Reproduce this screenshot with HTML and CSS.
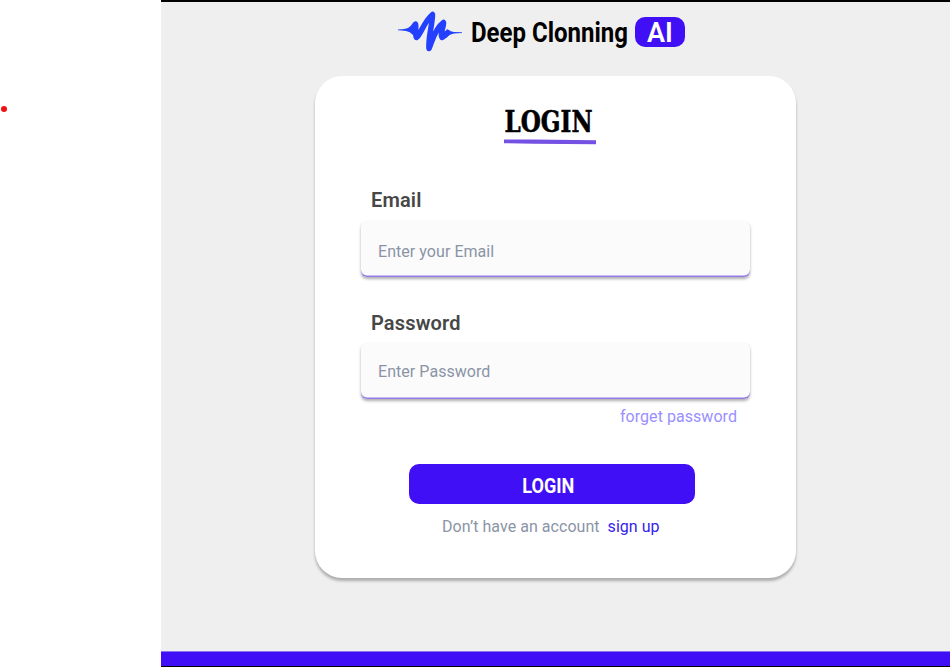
FILE: index.html
```html
<!DOCTYPE html>
<html lang="en">
<head>
<meta charset="utf-8">
<title>Deep Clonning AI</title>
<link rel="stylesheet" href="styles.css">
</head>
<body>
<aside class="gutter"><span class="dot"></span></aside>
<div class="screen">
  <header class="brand">
    <svg class="wave" viewBox="0 0 66 42" width="66" height="42" aria-hidden="true">
      <path class="tail" d="M1 18.500Q8 18.400 11 17Q14 15 16 12L19 22L16 24Q13 20.500 9 20Q5 19.500 1 19.300ZM46 27L50 18Q52 20.500 57 20.900L65 21.300V21.900L57 22.600Q53 23 49 27Z"/>
      <path class="pulse" d="M18.500 13C19.500 16 17.500 24 19.500 26.500C23.500 24 27 10.500 35.500 3.500C35.500 13 31 27 32 37.500C35 31 37.500 18 46.500 11.500C47 16 42.500 23 45 26.500C47 26 49 22.500 51 21.500"/>
    </svg>
    <svg class="wordmark" width="160" height="36">
      <text x="0" y="27.500" textLength="157" lengthAdjust="spacingAndGlyphs">Deep Clonning</text>
    </svg>
    <span class="badge">AI</span>
  </header>
  <main class="card">
    <h1 class="title">
      <svg class="title-text" width="92" height="32">
        <text x="0.5" y="27" textLength="88" lengthAdjust="spacingAndGlyphs">LOGIN</text>
      </svg>
      <svg class="underline" width="92" height="6" aria-hidden="true"><path d="M0 .5 28 .6 92 1.200V5.200L30 4.700 0 4.200Z"/></svg>
    </h1>
    <form class="form">
      <label class="label" for="email">Email</label>
      <input class="field" id="email" type="email" placeholder="Enter your Email">
      <label class="label label-password" for="password">Password</label>
      <input class="field field-password" id="password" type="password" placeholder="Enter Password">
      <a class="forgot">forget password</a>
      <button class="submit" type="button"><span class="submit-text">LOGIN</span></button>
      <p class="signup">Don’t have an account <a class="signup-link">sign up</a></p>
    </form>
  </main>
  <footer class="footer"></footer>
</div>
</body>
</html>
```
FILE: styles.css
```css
* { box-sizing: border-box; }
body {
  margin: 0;
  height: 667px;
  display: flex;
  overflow: hidden;
  background: #fff;
  font-family: Roboto, sans-serif;
}
.gutter { width: 161px; padding: 106px 0 0 1px; }
.dot { display: block; width: 6px; height: 6px; border-radius: 50%; background: #ed1212; }
.screen {
  flex: 1;
  display: flex;
  flex-direction: column;
  background: #efefef;
  border-top: 2px solid #000;
}
.brand { display: flex; align-items: center; height: 74px; padding: 0 0 14px 236px; }
.wave { flex: none; }
.tail { fill: #2440ff; }
.pulse { fill: none; stroke: #2440ff; stroke-width: 5.5; stroke-linecap: round; stroke-linejoin: round; }
.wordmark { margin-left: 8px; font-size: 27px; font-weight: 700; overflow: visible; }
.badge {
  margin-left: 4px;
  width: 50px;
  height: 30px;
  border-radius: 10px;
  background: #410ff5;
  color: #fff;
  font: 600 27px/32px Roboto, sans-serif;
  text-align: center;
}
.card {
  width: 481px;
  height: 502px;
  margin-left: 154px;
  padding: 29px 46px 0;
  border-radius: 27px;
  background: #fff;
  box-shadow: 0 3px 3px rgba(0, 0, 0, .28);
}
.title { width: 92px; height: 42px; margin: 0 0 0 143px; }
.title svg { display: block; overflow: visible; }
.title-text { font: 700 29px "DejaVu Serif", serif; stroke: #000; stroke-width: .6px; }
.title .underline { margin-top: 2px; fill: #7450e3; }
.form { display: flex; flex-direction: column; }
.label { height: 24px; margin: 42px 0 8px 10px; font-size: 20px; font-weight: 600; line-height: 23px; letter-spacing: .15px; color: #474747; }
.label-password { margin-top: 34px; line-height: 24px; }
.field {
  width: 389px;
  height: 56px;
  padding: 5px 17px 0;
  border: 0;
  border-radius: 6px;
  background: #fbfbfb;
  box-shadow: inset 0 -1.5px 0 #957ce8, 0 2px 3px rgba(0, 0, 0, .32);
  font: 16px Roboto, sans-serif;
  letter-spacing: .05px;
}
.field::placeholder { color: #8a94a6; opacity: 1; }
.field-password { padding-top: 1px; }
.forgot { align-self: flex-end; margin: 8px 13px 0 0; font-size: 16px; line-height: 20px; letter-spacing: .05px; color: #9990ff; }
.submit {
  width: 286px;
  height: 40px;
  margin: 37px 0 0 48px;
  padding: 3px 8px 0 0;
  border: 0;
  border-radius: 10px;
  background: #410ff5;
  color: #fff;
  font: 700 21px Roboto, sans-serif;
}
.submit-text { display: inline-block; transform: scaleX(.86); }
.signup { margin: 13px 0 0 81px; font-size: 16px; line-height: 20px; letter-spacing: .04px; color: #8a94a6; white-space: nowrap; }
.signup-link { margin-left: 4px; color: #3522ee; }
.footer { height: 16px; margin-top: auto; background: #410ff5; border-top: 1px solid #8b75ed; border-bottom: 1px solid #000; }
```
